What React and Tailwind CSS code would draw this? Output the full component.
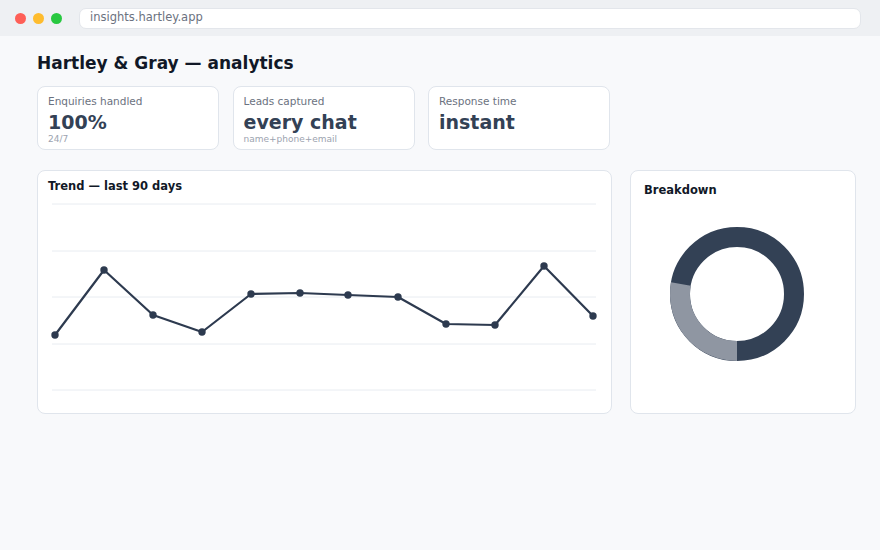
import React from "react";

const STATS = [
  { label: "Enquiries handled", value: "100%", sub: "24/7" },
  { label: "Leads captured", value: "every chat", sub: "name+phone+email" },
  { label: "Response time", value: "instant", sub: "" },
];

// trend points in chart coordinates (x, y)
const POINTS = [
  [7, 139], [56, 74], [105, 119], [154, 136], [203, 98], [252, 97],
  [300, 99], [350, 101], [398, 128], [447, 129], [496, 70], [545, 120],
];

const GRID_Y = [8, 55, 101, 148, 194];

const TrendChart = () => {
  const path = POINTS.map(([x, y], i) => `${i ? "L" : "M"}${x} ${y}`).join(" ");
  return (
    <svg width="552" height="208" viewBox="0 0 552 208" className="block">
      {GRID_Y.map((y) => (
        <line key={y} x1="4" x2="548" y1={y} y2={y} stroke="#e8ecf1" strokeWidth="1" />
      ))}
      <path d={path} fill="none" stroke="#2d3a4f" strokeWidth="2.2" strokeLinejoin="round" />
      {POINTS.map(([x, y]) => (
        <circle key={x} cx={x} cy={y} r="3.7" fill="#2d3a4f" />
      ))}
    </svg>
  );
};

const Donut = () => {
  const cx = 70;
  const cy = 70;
  const r = 57;
  // grey slice runs from 6 o'clock round to just above 9 o'clock
  const a0 = (180 * Math.PI) / 180;
  const a1 = (280 * Math.PI) / 180;
  const pt = (a) => [cx + r * Math.sin(a), cy - r * Math.cos(a)];
  const [x0, y0] = pt(a0);
  const [x1, y1] = pt(a1);
  return (
    <svg width="140" height="140" viewBox="0 0 140 140" className="block">
      <circle cx={cx} cy={cy} r={r} fill="none" stroke="#334155" strokeWidth="20" />
      <path
        d={`M${x0} ${y0} A${r} ${r} 0 0 1 ${x1} ${y1}`}
        fill="none"
        stroke="#8f96a2"
        strokeWidth="20"
      />
    </svg>
  );
};

const App = () => {
  return (
    <div className="w-[880px] h-[550px] bg-[#f8f9fb] font-['DejaVu_Sans',sans-serif] overflow-hidden">
      {/* browser chrome */}
      <div className="h-[36px] bg-[#eef0f3] flex items-center pl-[15px] pr-[19px]">
        <div className="flex gap-[7px]">
          <span className="w-[11px] h-[11px] rounded-full bg-[#fe5f57]" />
          <span className="w-[11px] h-[11px] rounded-full bg-[#febc2e]" />
          <span className="w-[11px] h-[11px] rounded-full bg-[#28c840]" />
        </div>
        <div className="ml-[17px] flex-1 h-[21px] bg-white rounded-[7px] border border-[#e3e6eb] flex items-center pl-[10px] text-[11.5px] text-[#6b7280]">
          insights.hartley.app
        </div>
      </div>

      <div className="pl-[37px] pt-[16px] w-[855px]">
        <h1 className="text-[17px] leading-[22px] font-bold text-[#111827]">
          Hartley &amp; Gray — analytics
        </h1>

        <div className="flex gap-[13.5px] mt-[12px]">
          {STATS.map((s) => (
            <div
              key={s.label}
              className="w-[182px] h-[64px] bg-white border border-[#e0e5ec] rounded-[8px] px-[10px] pt-[6.5px]"
            >
              <div className="text-[10.5px] leading-[14px] text-[#6b7280]">{s.label}</div>
              <div className="text-[19px] leading-[22px] mt-[3px] font-bold text-[#334155]">
                {s.value}
              </div>
              {s.sub && (
                <div className="text-[9px] leading-[11px] mt-[1px] text-[#9ca3af]">{s.sub}</div>
              )}
            </div>
          ))}
        </div>

        <div className="grid grid-cols-[575px_226px] gap-[18px] mt-[20px]">
          <div className="h-[244px] bg-white border border-[#e0e5ec] rounded-[8px] pl-[10px] pt-[7px]">
            <div className="text-[11.5px] leading-[16px] font-bold text-[#111827]">
              Trend — last 90 days
            </div>
            <div className="mt-[2px]">
              <TrendChart />
            </div>
          </div>

          <div className="h-[244px] bg-white border border-[#e0e5ec] rounded-[8px] pl-[13px] pt-[11px]">
            <div className="text-[11.5px] leading-[16px] font-bold text-[#111827]">Breakdown</div>
            <div className="mt-[26px] ml-[23px]">
              <Donut />
            </div>
          </div>
        </div>
      </div>
    </div>
  );
};

export default App;
